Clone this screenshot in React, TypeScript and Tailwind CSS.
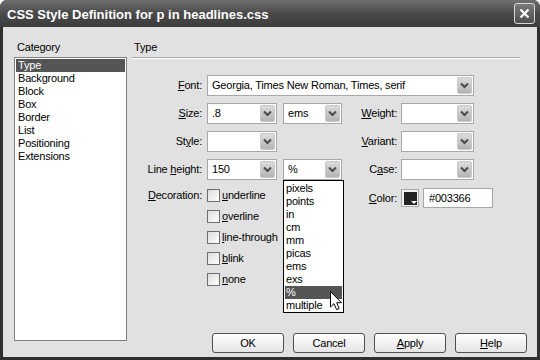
const categories = ["Type", "Background", "Block", "Box", "Border", "List", "Positioning", "Extensions"]
const units = ["pixels", "points", "in", "cm", "mm", "picas", "ems", "exs", "%", "multiple"]

function Chevron() {
  return (
    <svg width="9" height="7" viewBox="0 0 9 7">
      <path d="M1 1.5 L4.5 5 L8 1.5" fill="none" stroke="#4a4a4a" strokeWidth="2" />
    </svg>
  )
}

function Select({ value, w, children }: { value?: string; w: string; children?: React.ReactNode }) {
  return (
    <div className={`relative flex h-[21px] items-center border border-[#a8a8a8] bg-white ${w}`}>
      <span className="flex-1 truncate pl-[4px]">{value}</span>
      <div className="mr-px flex h-[17px] w-[15px] items-center justify-center rounded-[2px] border border-[#c9c9c9] bg-gradient-to-b from-[#dcdcdc] to-[#b4b4b4]">
        <Chevron />
      </div>
      {children}
    </div>
  )
}

function Label({ pre, key_, post, w }: { pre: string; key_: string; post: string; w: string }) {
  return (
    <span className={`text-right ${w}`}>
      {pre}
      <span className="underline">{key_}</span>
      {post}
    </span>
  )
}

function Check({ pre, key_, post }: { pre: string; key_: string; post: string }) {
  return (
    <div className="flex h-[13px] items-center">
      <div className="h-[13px] w-[13px] border border-[#6e6e6e] bg-gradient-to-br from-[#dcdcdc] to-white" />
      <span className="ml-[2px] leading-[13px]">
        {pre}
        <span className="underline">{key_}</span>
        {post}
      </span>
    </div>
  )
}

function Button({ children }: { children: React.ReactNode }) {
  return (
    <div className="flex h-[20px] w-[72px] items-center justify-center rounded-[3px] border border-[#4f4f4f] bg-gradient-to-b from-white to-[#e4e4e4]">
      {children}
    </div>
  )
}

export default function App() {
  return (
    <div className="flex h-[360px] w-[540px] flex-col overflow-hidden rounded-t-[7px] bg-[#2f2f2f] font-['Liberation_Sans',Arial,sans-serif] text-[11px] tracking-[-0.2px] text-black">
      {/* title bar */}
      <div className="flex h-[27px] shrink-0 items-center bg-gradient-to-b from-[#707070] via-[#4a4a4a] to-[#3c3c3c] pl-[7px] pr-[5px]">
        <span className="flex-1 pt-[3px] text-[13px] font-bold tracking-normal text-white">
          CSS Style Definition for p in headlines.css
        </span>
        <div className="flex h-[21px] w-[21px] items-center justify-center rounded-[3px] border border-[#d8d8d8] bg-gradient-to-b from-[#7a7a7a] to-[#505050]">
          <svg width="11" height="11" viewBox="0 0 11 11">
            <path d="M1.5 1.5 L9.5 9.5 M9.5 1.5 L1.5 9.5" stroke="white" strokeWidth="2.2" />
          </svg>
        </div>
      </div>

      {/* body */}
      <div className="mx-[3px] mb-[3px] flex flex-1 bg-[#e1e1e1]">
        {/* category column */}
        <div className="flex flex-col pl-[11px] pt-[14px]">
          <span className="pl-[3px] leading-[13px]">Category</span>
          <div className="mt-[3px] h-[284px] w-[113px] border border-[#7f7f7f] bg-white p-px">
            {categories.map((c, i) => (
              <div
                key={c}
                className={`h-[13px] pl-[2px] leading-[13px] ${i === 0 ? "bg-[#555555] text-white" : ""}`}
              >
                {c}
              </div>
            ))}
          </div>
        </div>

        {/* type panel */}
        <div className="ml-[5px] flex flex-1 flex-col pt-[14px] pb-[4px]">
          <div className="mr-[17px] border-b border-[#a8a8a8] pb-[3px] pl-[2px] leading-[13px] shadow-[0_1px_0_#ffffff]">
            Type
          </div>

          <div className="mt-[17px] flex flex-col gap-[7px]">
            <div className="flex items-center">
              <Label pre="" key_="F" post="ont:" w="w-[70px]" />
              <div className="ml-[5px]">
                <Select value="Georgia, Times New Roman, Times, serif" w="w-[267px]" />
              </div>
            </div>

            <div className="flex items-center">
              <Label pre="" key_="S" post="ize:" w="w-[70px]" />
              <div className="ml-[5px]">
                <Select value=".8" w="w-[70px]" />
              </div>
              <div className="ml-[6px]">
                <Select value="ems" w="w-[59px]" />
              </div>
              <Label pre="" key_="W" post="eight:" w="w-[55px]" />
              <div className="ml-[4px]">
                <Select w="w-[73px]" />
              </div>
            </div>

            <div className="flex items-center">
              <Label pre="St" key_="y" post="le:" w="w-[70px]" />
              <div className="ml-[5px]">
                <Select w="w-[70px]" />
              </div>
              <div className="ml-[6px] w-[59px]" />
              <Label pre="" key_="V" post="ariant:" w="w-[55px]" />
              <div className="ml-[4px]">
                <Select w="w-[73px]" />
              </div>
            </div>

            <div className="relative z-10 flex items-center">
              <Label pre="Line " key_="h" post="eight:" w="w-[70px]" />
              <div className="ml-[5px]">
                <Select value="150" w="w-[70px]" />
              </div>
              <div className="ml-[6px]">
                <Select value="%" w="w-[59px]">
                  {/* open unit list */}
                  <div className="absolute left-[-1px] top-[20px] w-[61px] border border-black bg-white px-px pt-px">
                    {units.map((u) => (
                      <div
                        key={u}
                        className={`h-[13px] pl-px leading-[13px] ${u === "%" ? "bg-[#555555] text-white" : ""}`}
                      >
                        {u}
                      </div>
                    ))}
                    <svg className="absolute left-[46px] top-[110px]" width="13" height="20" viewBox="0 0 13 20">
                      <path
                        d="M0.5 0.5 L0.5 16 L4 12.6 L6.6 18.6 L9.2 17.5 L6.7 11.7 L11.5 11.7 Z"
                        fill="white"
                        stroke="black"
                        strokeWidth="1"
                      />
                    </svg>
                  </div>
                </Select>
              </div>
              <Label pre="C" key_="a" post="se:" w="w-[55px]" />
              <div className="ml-[4px]">
                <Select w="w-[73px]" />
              </div>
            </div>
          </div>

          {/* decoration + color */}
          <div className="mt-[9px] flex items-start">
            <div className="flex h-[13px] w-[70px] items-center justify-end">
              <Label pre="" key_="D" post="ecoration:" w="" />
            </div>
            <div className="ml-[5px] flex w-[135px] flex-col gap-[8px]">
              <Check pre="" key_="u" post="nderline" />
              <Check pre="" key_="o" post="verline" />
              <Check pre="" key_="l" post="ine-through" />
              <Check pre="" key_="b" post="link" />
              <Check pre="" key_="n" post="one" />
            </div>
            <div className="-mt-[1px] flex h-[20px] items-center">
              <Label pre="" key_="C" post="olor:" w="w-[55px]" />
              <div className="relative ml-[4px] flex h-[18px] w-[18px] items-center justify-center border border-[#a8a8a8] bg-[#f2f2f2]">
                <div className="h-[13px] w-[13px] bg-[#222222]" />
                <svg className="absolute bottom-[1px] right-[1px]" width="6" height="4" viewBox="0 0 6 4">
                  <path d="M0 0 L6 0 L3 3 Z" fill="#ffffff" />
                </svg>
              </div>
              <div className="ml-[4px] flex h-[20px] w-[70px] items-center border border-[#a8a8a8] bg-white pl-[5px]">
                #003366
              </div>
            </div>
          </div>

          {/* buttons */}
          <div className="mt-auto flex justify-end gap-[9px] pr-[10px]">
            <Button>OK</Button>
            <Button>Cancel</Button>
            <Button>
              <span className="underline">A</span>pply
            </Button>
            <Button>
              <span className="underline">H</span>elp
            </Button>
          </div>
        </div>
      </div>
    </div>
  )
}
